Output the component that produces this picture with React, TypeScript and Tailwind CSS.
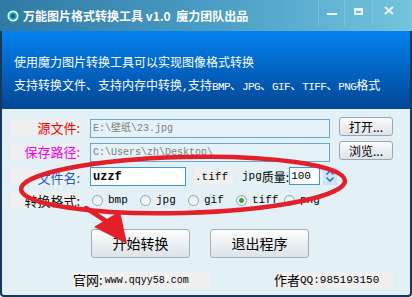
import React from 'react';

// 万能图片格式转换工具 — main window with the red annotation drawn on top.

const CJK = '"Noto Sans CJK SC", "Liberation Sans", sans-serif';
const MONO = '"Liberation Mono", "Noto Sans CJK SC", monospace';

const Label: React.FC<{ text: string; color: string }> = ({ text, color }) => (
  <div
    className="w-[70px] h-[16px] bg-[#f0f0f0] flex items-center justify-end text-[13px] leading-none"
    style={{ color, fontFamily: CJK }}
  >
    {text}
  </div>
);

const Radio: React.FC<{ label: string; checked?: boolean }> = ({ label, checked }) => (
  <div className="w-[48px] flex items-center gap-[5px]">
    <div className="w-[11px] h-[11px] rounded-full border border-[#8aa2b8] bg-gradient-to-b from-[#e6ecf0] to-white flex items-center justify-center">
      {checked && <div className="w-[5px] h-[5px] rounded-full bg-[#3aa528]" />}
    </div>
    <span className="text-[11px] text-black leading-none" style={{ fontFamily: MONO }}>
      {label}
    </span>
  </div>
);

const SmallButton: React.FC<{ text: string }> = ({ text }) => (
  <div
    className="w-[54px] h-[19px] -mt-[2px] ml-[9px] rounded-[3px] border border-[#9aa6b0] bg-gradient-to-b from-[#fbfbfb] to-[#dde3e7] flex items-center justify-center text-[12px] text-black"
    style={{ fontFamily: CJK }}
  >
    {text}
  </div>
);

const BigButton: React.FC<{ text: string }> = ({ text }) => (
  <div
    className="w-[99px] h-[29px] rounded-[3px] border border-[#a4adb5] bg-gradient-to-b from-[#fdfdfd] to-[#dce3e7] flex items-center justify-center text-[14px] text-black"
    style={{ fontFamily: CJK }}
  >
    {text}
  </div>
);

const Lat: React.FC<{ children: React.ReactNode }> = ({ children }) => (
  <span className="text-[11px] tracking-[-0.6px]" style={{ fontFamily: MONO }}>
    {children}
  </span>
);

export default function App() {
  return (
    <div className="relative w-[412px] h-[297px] overflow-hidden bg-white flex flex-col">
      {/* title bar */}
      <div className="h-[31px] bg-gradient-to-r from-[#2e79a5] via-[#4a9cc4] to-[#74c4de] flex items-center relative shrink-0">
        <svg width="16" height="16" viewBox="0 0 16 16" className="ml-[5px]">
          <circle cx="8" cy="8" r="7.5" fill="#1e8a9a" />
          <circle cx="8" cy="8" r="5.5" fill="#e8f6f8" />
          <circle cx="8" cy="8" r="3.8" fill="#2a9ab6" />
          <circle cx="8" cy="8" r="2" fill="#0f5f80" />
        </svg>
        <span className="ml-[2px] text-white font-bold text-[12px] whitespace-pre" style={{ fontFamily: CJK }}>
          {'万能图片格式转换工具 v1.0  魔力团队出品'}
        </span>
        <div className="absolute right-[8px] top-0 h-[26px] flex">
          <div className="w-[26px] h-full border-l border-[#8fc8de]/60 flex items-center justify-center">
            <div className="w-[10px] h-[2px] bg-[#e8f4f8] mt-[2px]" />
          </div>
          <div className="w-[28px] h-full border-l border-[#8fc8de]/60 flex items-center justify-center">
            <div className="w-[9px] h-[7px] border-2 border-t-[3px] border-[#e8f4f8] -mt-[4px]" />
          </div>
          <div className="w-[32px] h-full border-l border-[#8fc8de]/60 flex items-center justify-center">
            <svg width="10" height="9" viewBox="0 0 10 9" className="-mt-[5px]">
              <path d="M1 1 L9 8 M9 1 L1 8" stroke="#e8f4f8" strokeWidth="2" />
            </svg>
          </div>
        </div>
      </div>

      {/* banner + body, framed */}
      <div className="flex-1 flex flex-col border-x-2 border-b-2 border-[#16385a] rounded-b-[4px] bg-[#e3f1f7]">
        <div
          className="h-[78px] bg-gradient-to-b from-[#0382f0] to-[#024796] px-[12px] pt-[25px] flex flex-col gap-[11px] text-white text-[12px] leading-[12px] shrink-0 whitespace-nowrap"
          style={{ fontFamily: CJK }}
        >
          <div>使用魔力图片转换工具可以实现图像格式转换</div>
          <div>
            支持转换文件、支持内存中转换<Lat>,</Lat>支持<Lat>BMP</Lat>、<Lat>JPG</Lat>、<Lat>GIF</Lat>、<Lat>TIFF</Lat>、<Lat>PNG</Lat>格式
          </div>
        </div>

        <div className="flex flex-col pl-[8px] pt-[10px]">
          {/* source file */}
          <div className="flex items-start h-[19px]">
            <Label text="源文件:" color="#f00000" />
            <div
              className="ml-[10px] w-[240px] h-[19px] border border-[#6aa6d2] bg-[#e5f2f7] flex items-center px-[2px] text-[10px] text-[#808080]"
              style={{ fontFamily: MONO }}
            >
              E:\壁纸\23.jpg
            </div>
            <SmallButton text="打开..." />
          </div>

          {/* save path */}
          <div className="flex items-start h-[19px] mt-[5px]">
            <Label text="保存路径:" color="#f000f0" />
            <div
              className="ml-[10px] w-[240px] h-[19px] border border-[#6aa6d2] bg-[#e5f2f7] flex items-center px-[2px] text-[10px] text-[#808080]"
              style={{ fontFamily: MONO }}
            >
              C:\Users\zh\Desktop\
            </div>
            <SmallButton text="浏览..." />
          </div>

          {/* file name */}
          <div className="flex items-start h-[19px] mt-[5px]">
            <div className="mt-[2px]">
              <Label text="文件名:" color="#1060d0" />
            </div>
            <div
              className="ml-[10px] w-[96px] h-[19px] border border-[#3a9ae0] bg-white flex items-center px-[2px] text-[12px] font-semibold text-black"
              style={{ fontFamily: MONO }}
            >
              uzzf
            </div>
            <div
              className="ml-[8px] mt-[2px] w-[39px] h-[16px] bg-[#f0f0f0] flex items-center px-[1px] text-[11px] text-black"
              style={{ fontFamily: MONO }}
            >
              .tiff
            </div>
            <div className="ml-[9px] mt-[1px] flex items-center h-[17px] text-[12px] text-black" style={{ fontFamily: CJK }}>
              <span style={{ fontFamily: MONO }} className="text-[11px]">jpg</span>质量:
            </div>
            <div
              className="w-[31px] h-[18px] border border-[#3a9ae0] bg-white flex items-center px-[1px] text-[11px] text-black"
              style={{ fontFamily: MONO }}
            >
              100
            </div>
            <div className="ml-[3px] w-[14px] h-[18px] bg-[#cfe4f0] flex flex-col items-center justify-center gap-[1px]">
              <svg width="10" height="14" viewBox="0 0 10 14">
                <path d="M1.5 5.5 L5 2 L8.5 5.5 M1.5 8.5 L5 12 L8.5 8.5" stroke="#2a7ac0" strokeWidth="1.6" fill="none" />
              </svg>
            </div>
          </div>

          {/* format */}
          <div className="flex items-center h-[18px] mt-[5px]">
            <Label text="转换格式:" color="#101010" />
            <div className="ml-[12px] flex items-center">
              <Radio label="bmp" />
              <Radio label="jpg" />
              <Radio label="gif" />
              <Radio label="tiff" checked />
              <Radio label="png" />
            </div>
          </div>

          {/* actions */}
          <div className="flex mt-[20px] ml-[81px] gap-[20px]">
            <BigButton text="开始转换" />
            <BigButton text="退出程序" />
          </div>

          {/* footer */}
          <div className="flex mt-[14px] ml-[63px]">
            <div className="w-[137px] h-[16px] bg-[#f0f0f0] flex items-center text-[13px] text-black" style={{ fontFamily: CJK }}>
              官网:
              <span className="ml-[2px] text-[10px]" style={{ fontFamily: MONO }}>www.qqyy58.com</span>
            </div>
            <div className="ml-[64px] w-[119px] h-[16px] bg-[#f0f0f0] flex items-center text-[13px] text-black" style={{ fontFamily: CJK }}>
              作者<span className="text-[11px]" style={{ fontFamily: MONO }}>QQ:985193150</span>
            </div>
          </div>
        </div>
      </div>

      {/* red annotation */}
      <svg className="absolute inset-0 pointer-events-none" width="412" height="297" viewBox="0 0 412 297">
        <ellipse cx="183" cy="185" rx="162" ry="28" transform="rotate(-1.5 183 185)" fill="none" stroke="#e3202a" strokeWidth="4.5" />
        <path d="M86 208 L106 221" stroke="#e3202a" strokeWidth="4.5" strokeLinecap="round" />
        <path d="M94 227 L120 211 L127 244 Z" fill="#e3202a" />
      </svg>
    </div>
  );
}
